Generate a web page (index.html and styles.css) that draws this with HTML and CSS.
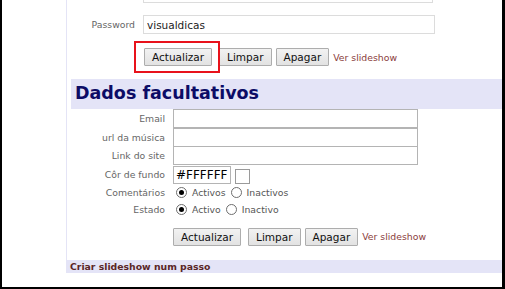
FILE: index.html
```html
<!DOCTYPE html>
<html>
<head>
<meta charset="utf-8">
<link rel="stylesheet" href="styles.css">
</head>
<body>
<div class="frame">
  <div class="panel">
    <div class="sec1">
      <div class="row row-cut">
        <span class="lbl"></span>
        <input class="txt light" type="text" value="">
      </div>
      <div class="row row-pass">
        <span class="lbl">Password</span>
        <input class="txt light" type="text" value="visualdicas">
      </div>
      <div class="row row-btns">
        <span class="lbl"></span>
        <div class="btns">
          <button class="btn">Actualizar</button>
          <button class="btn">Limpar</button>
          <button class="btn">Apagar</button>
          <a class="link">Ver slideshow</a>
        </div>
      </div>
    </div>

    <div class="head"><h2>Dados facultativos</h2></div>

    <div class="sec2">
      <div class="row r2">
        <span class="lbl">Email</span>
        <input class="txt dark" type="text" value="">
      </div>
      <div class="row r2">
        <span class="lbl">url da música</span>
        <input class="txt dark" type="text" value="">
      </div>
      <div class="row r2">
        <span class="lbl">Link do site</span>
        <input class="txt dark" type="text" value="">
      </div>
      <div class="row r-cor">
        <span class="lbl">Côr de fundo</span>
        <div class="cor">
          <input class="txt dark hex" type="text" value="#FFFFFF">
          <span class="swatch"></span>
        </div>
      </div>
      <div class="row r-radio">
        <span class="lbl">Comentários</span>
        <div class="radios">
          <label><input type="radio" name="c" checked> Activos</label>
          <label><input type="radio" name="c"> Inactivos</label>
        </div>
      </div>
      <div class="row r-radio">
        <span class="lbl">Estado</span>
        <div class="radios">
          <label><input type="radio" name="e" checked> Activo</label>
          <label><input type="radio" name="e"> Inactivo</label>
        </div>
      </div>
      <div class="row row-btns2">
        <span class="lbl"></span>
        <div class="btns">
          <button class="btn">Actualizar</button>
          <button class="btn">Limpar</button>
          <button class="btn">Apagar</button>
          <a class="link">Ver slideshow</a>
        </div>
      </div>
    </div>

    <div class="foot">Criar slideshow num passo</div>
  </div>
  <div class="highlight"></div>
</div>
</body>
</html>
```
FILE: styles.css
```css
* { box-sizing: border-box; }
html, body { margin: 0; padding: 0; background: #fff; }
body {
  width: 505px;
  height: 289px;
  overflow: hidden;
  font-family: "DejaVu Sans", Verdana, sans-serif;
}
.frame {
  position: relative;
  width: 505px;
  height: 289px;
  border-left: 2px solid #000;
  border-right: 3px solid #000;
  border-bottom: 2px solid #000;
  overflow: hidden;
}
.panel {
  margin-left: 64px;
  height: 273px;
  border-left: 1px solid #e4e4f6;
  display: flex;
  flex-direction: column;
}
.row {
  display: grid;
  align-items: center;
}
.sec1 .row { grid-template-columns: 68px 1fr; column-gap: 8px; }
.sec2 .row { grid-template-columns: 98px 1fr; column-gap: 8px; }
.lbl {
  text-align: right;
  font-size: 9.3px;
  color: #666;
  white-space: nowrap;
}
.txt {
  height: 19px;
  margin: 0;
  padding: 0 3px;
  font-family: "DejaVu Sans", Verdana, sans-serif;
  font-size: 10.5px;
  color: #222;
  background: #fff;
  outline: none;
}
.light { width: 292px; border: 1px solid #dcdcdc; }
.dark { width: 245px; border: 1px solid #b4b4b4; }
.row-cut { margin-top: -16px; }
.row-cut .txt { width: 290px; }
.row-pass { margin-top: 12px; }
.row-btns { margin-top: 14px; }
.sec1 .btns { margin-left: 1px; }
.btns { display: flex; align-items: center; gap: 4px; }
.btn {
  height: 18px;
  margin: 0;
  padding: 0 7px;
  font-family: "DejaVu Sans", Verdana, sans-serif;
  font-size: 10.5px;
  color: #111;
  background: linear-gradient(#f2f2f2, #e2e2e2);
  border: 1px solid #adadad;
  border-radius: 1px;
}
.btn:first-child { margin-right: 3px; }
.link {
  font-size: 9.3px;
  color: #8a3c3c;
}
.head {
  margin: 13px 0 0 4px;
  height: 30px;
  background: #e4e4f7;
  display: flex;
  align-items: center;
  padding-left: 4px;
}
.head h2 {
  margin: 0;
  font-size: 17.5px;
  font-weight: bold;
  color: #0c0c66;
  line-height: 1;
}
.r2 { margin-bottom: -0.5px; }
.r-cor { margin-top: 1px; }
.cor { display: flex; align-items: flex-end; gap: 4px; }
.hex { width: 58px; height: 18px; font-size: 12px; color: #000; padding: 0 2px; }
.swatch {
  width: 15px;
  height: 15px;
  border: 1px solid #9a9a9a;
  background: #fff;
}
.r-radio { height: 17px; }
.radios { display: flex; gap: 5px; padding-left: 3px; }
.radios label {
  display: flex;
  align-items: center;
  gap: 5px;
  font-size: 9.3px;
  color: #555;
}
.radios input {
  appearance: none;
  -webkit-appearance: none;
  margin: 0;
  width: 11px;
  height: 11px;
  border: 1px solid #6e6e6e;
  border-radius: 50%;
  background: #fff;
  display: grid;
  place-items: center;
}
.radios input:checked::after {
  content: "";
  width: 5px;
  height: 5px;
  border-radius: 50%;
  background: #000;
}
.row-btns2 { margin-top: 10px; }
.foot {
  margin-top: auto;
  height: 13px;
  background: #e4e4f7;
  padding-left: 3px;
  font-size: 9.3px;
  font-weight: bold;
  color: #5a2626;
  display: flex;
  align-items: center;
}
.highlight {
  position: absolute;
  left: 132px;
  top: 41px;
  width: 86px;
  height: 32px;
  border: 2px solid #e8121b;
}
```
